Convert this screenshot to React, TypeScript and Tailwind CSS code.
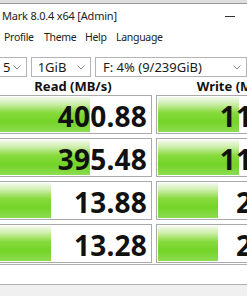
import React from 'react';

type Row = { read: string; readBar: number; write: string; writeBar: number };

const rows: Row[] = [
  { read: '400.88', readBar: 94, write: '117.62', writeBar: 81 },
  { read: '395.48', readBar: 94, write: '116.94', writeBar: 81 },
  { read: '13.88', readBar: 55, write: '24.37', writeBar: 60 },
  { read: '13.28', readBar: 55, write: '23.81', writeBar: 60 },
];

const Chevron: React.FC = () => (
  <svg width="8" height="5" viewBox="0 0 8 5" className="shrink-0">
    <path d="M0.5 0.5 L4 4 L7.5 0.5" fill="none" stroke="#8a8a8a" strokeWidth="1" />
  </svg>
);

const Combo: React.FC<{ label: string; className: string }> = ({ label, className }) => (
  <div className={`h-[20px] flex items-center justify-between border border-[#b4b4b4] bg-white pr-[5px] ${className}`}>
    <span className="text-[13px] text-[#1a1a1a] leading-none">{label}</span>
    <Chevron />
  </div>
);

const Cell: React.FC<{ value: string; bar: number }> = ({ value, bar }) => (
  <div className="relative w-[158px] h-[39px] shrink-0 border border-[#a9a9a9] bg-white p-px">
    <div
      className="absolute left-px top-px bottom-px bg-[linear-gradient(to_bottom,#f3faee_0%,#cdeeaa_20%,#86da3c_45%,#74d428_70%,#8cdc50_100%)]"
      style={{ width: bar }}
    />
    <div className="relative h-full flex items-center justify-end pr-[3px] pt-[3px] text-[28px] font-bold text-[#111] leading-none tracking-[0.2px]">
      {value}
    </div>
  </div>
);

export default function App() {
  return (
    <div className="w-[247px] h-[296px] overflow-hidden bg-white font-['Noto_Sans',sans-serif]">
      <div className="h-[3px] bg-[#dedede]" />
      <div className="h-px bg-[#9a9a9a]" />

      {/* title bar */}
      <div className="h-[24px] flex items-center justify-between pl-[2px] pr-[12px]">
        <span className="text-[11px] text-[#222] tracking-[-0.2px]">Mark 8.0.4 x64 [Admin]</span>
        <div className="w-[10px] h-px bg-[#333]" />
      </div>

      {/* menu */}
      <div className="h-[19px] flex items-center pl-[4px] text-[10.5px] text-[#222] tracking-[-0.3px]">
        <span className="w-[40px]">Profile</span>
        <span className="w-[41px]">Theme</span>
        <span className="w-[31px]">Help</span>
        <span>Language</span>
      </div>

      {/* combos */}
      <div className="mt-[10px] flex gap-[4px] -ml-[6px]">
        <Combo label="5" className="w-[34px] pl-[8px]" />
        <Combo label="1GiB" className="w-[64px] pl-[6px]" />
        <Combo label="F: 4% (9/239GiB)" className="w-[152px] shrink-0 pl-[7px]" />
      </div>

      {/* headers */}
      <div className="h-[18px] flex gap-[4px] -ml-[6px]">
        <div className="w-[158px] shrink-0 text-center text-[13px] font-bold text-[#111] leading-[18px]">Read (MB/s)</div>
        <div className="w-[158px] shrink-0 text-center text-[13px] font-bold text-[#111] leading-[18px] pl-[4px]">Write (MB/s)</div>
      </div>

      {/* results */}
      <div className="flex flex-col gap-[4px] -ml-[6px]">
        {rows.map((r, i) => (
          <div key={i} className="flex gap-[4px]">
            <Cell value={r.read} bar={r.readBar} />
            <Cell value={r.write} bar={r.writeBar} />
          </div>
        ))}
      </div>

      {/* comment box */}
      <div className="mt-[1px] h-[21px] border-y border-[#b0b0b0] bg-white" />
      <div className="h-[20px] bg-[#f0f0f0]" />
    </div>
  );
}
